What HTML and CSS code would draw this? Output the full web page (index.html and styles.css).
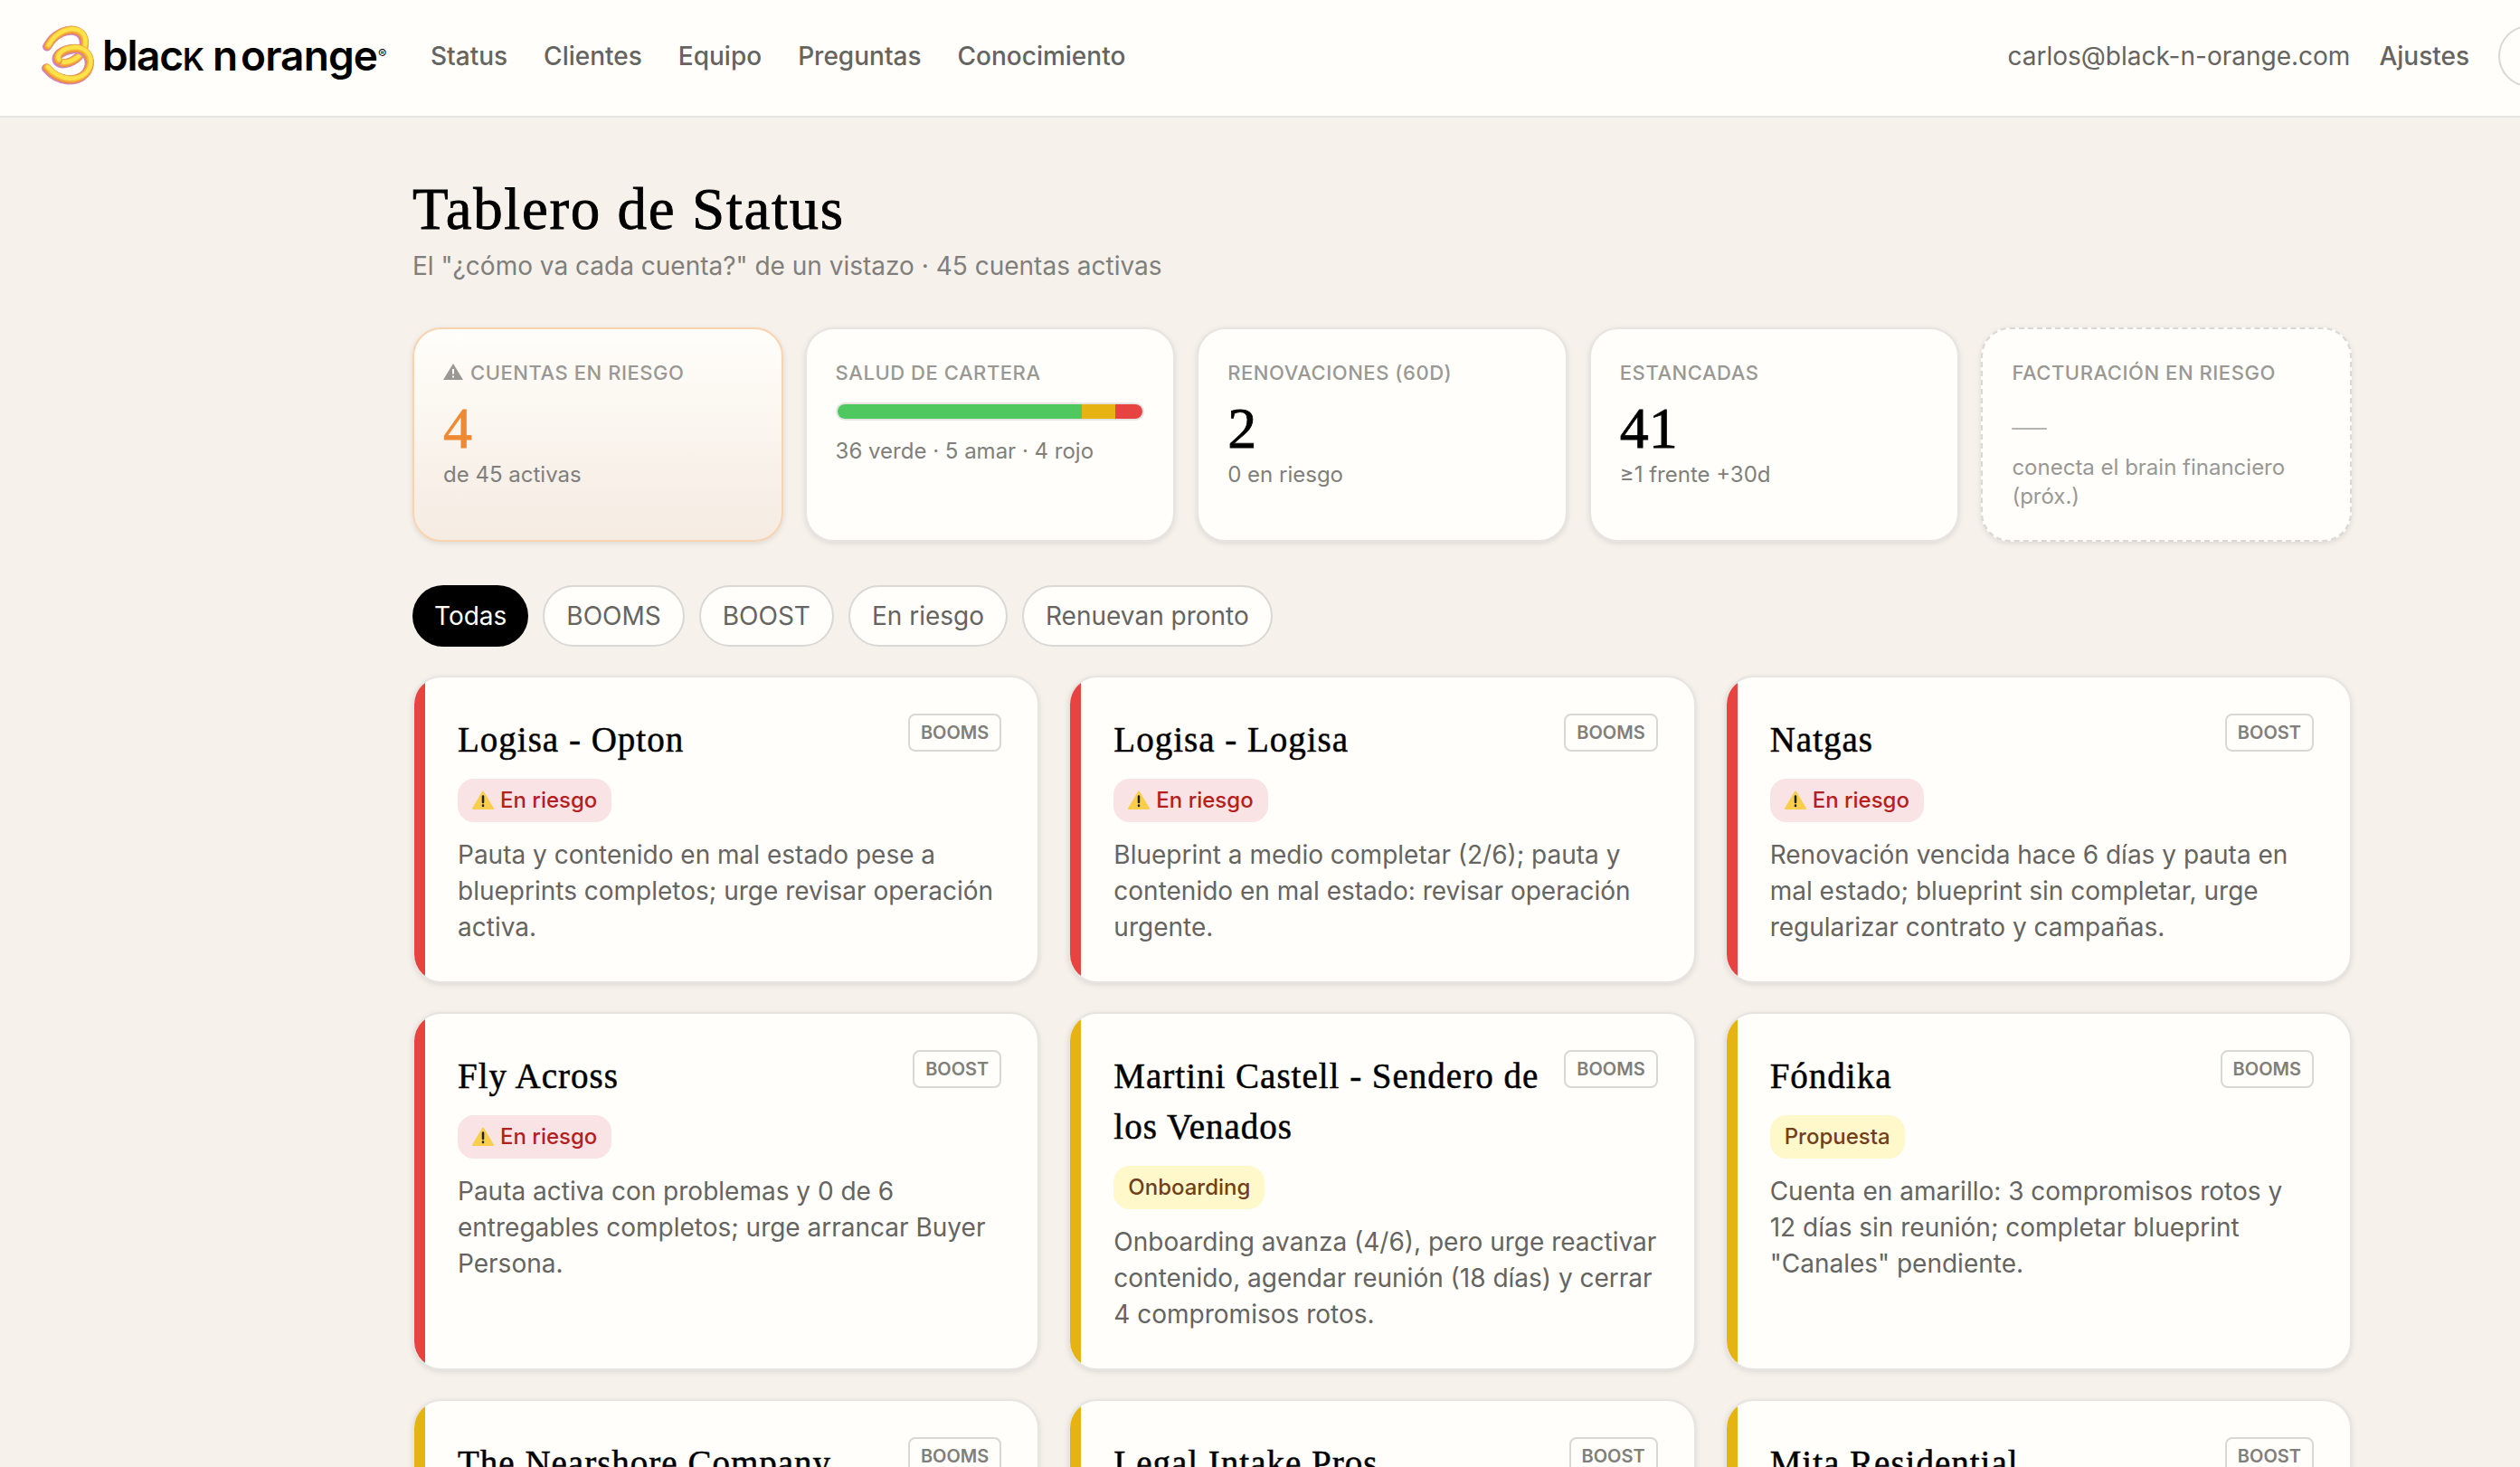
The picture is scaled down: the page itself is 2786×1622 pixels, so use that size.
FILE: index.html
```html
<!DOCTYPE html>
<html lang="es">

<head>
  <meta charset="UTF-8">
  <meta name="viewport" content="width=device-width, initial-scale=1.0">
  <title>Tablero de Status</title>
  <link rel="stylesheet" href="styles.css">
</head>

<body>
  <header class="topbar">
    <a class="brand" href="#">
      <svg width="394" height="80" viewBox="0 0 394 80">
        <defs>
          <path id="coil-top" d="M12 28 C20 13 36 7 46 12 C55 17 54 29 49 36 C43 45 29 50 23.500 44.500 C20 39 28 33 40 31" />
          <path id="coil-bottom" d="M23.500 44 C20 38 28 31.500 40 30.500 C52 29.500 59.500 38 58.500 48 C57 60 46 65.500 35 65 C24 64 16 58 11 52" />
        </defs>
        <g class="coil">
          <use href="#coil-top" class="coil-violet" />
          <use href="#coil-top" class="coil-orange" />
          <use href="#coil-top" class="coil-amber" />
          <use href="#coil-top" class="coil-yellow" />
          <use href="#coil-bottom" class="coil-violet" />
          <use href="#coil-bottom" class="coil-orange" />
          <use href="#coil-bottom" class="coil-amber" />
          <use href="#coil-bottom" class="coil-yellow" />
        </g>
        <text class="wordmark" x="73" y="56" textLength="90">blac</text>
        <text class="wordmark wordmark-k" x="162" y="56">K</text>
        <text class="wordmark" x="195" y="56">n</text>
        <text class="wordmark" x="226" y="56" textLength="152">orange</text>
        <text class="reg" x="378" y="43">®</text>
      </svg>
    </a>
    <nav class="nav">
      <a href="#">Status</a>
      <a href="#">Clientes</a>
      <a href="#">Equipo</a>
      <a href="#">Preguntas</a>
      <a href="#">Conocimiento</a>
    </nav>
    <div class="session">
      <span>carlos@black-n-orange.com</span>
      <a href="#">Ajustes</a>
      <button class="logout" aria-label="Salir"></button>
    </div>
  </header>

  <main class="container">
    <h1>Tablero de Status</h1>
    <p class="subtitle">El "¿cómo va cada cuenta?" de un vistazo · 45 cuentas activas</p>

    <section class="kpis">
      <div class="kpi kpi-risk">
        <div class="kpi-label"><svg class="warn-mono" width="22" height="18" viewBox="0 0 22 18"><path class="tri" d="M11 0 L22 18 H0 Z" /><path class="mark" d="M11 6 V11.500 M11 13.500 V15.500" /></svg>Cuentas en riesgo</div>
        <div class="kpi-value">4</div>
        <div class="kpi-sub">de 45 activas</div>
      </div>
      <div class="kpi">
        <div class="kpi-label">Salud de cartera</div>
        <div class="health">
          <span class="green" style="flex-grow: 36"></span>
          <span class="yellow" style="flex-grow: 5"></span>
          <span class="red" style="flex-grow: 4"></span>
        </div>
        <div class="kpi-sub">36 verde · 5 amar · 4 rojo</div>
      </div>
      <div class="kpi">
        <div class="kpi-label">Renovaciones (60d)</div>
        <div class="kpi-value">2</div>
        <div class="kpi-sub">0 en riesgo</div>
      </div>
      <div class="kpi">
        <div class="kpi-label">Estancadas</div>
        <div class="kpi-value">41</div>
        <div class="kpi-sub">≥1 frente +30d</div>
      </div>
      <div class="kpi kpi-empty">
        <div class="kpi-label">Facturación en riesgo</div>
        <div class="kpi-value">—</div>
        <div class="kpi-sub">conecta el brain financiero (próx.)</div>
      </div>
    </section>

    <div class="filters">
      <button class="chip active">Todas</button>
      <button class="chip">BOOMS</button>
      <button class="chip">BOOST</button>
      <button class="chip">En riesgo</button>
      <button class="chip">Renuevan pronto</button>
    </div>

    <section class="cards">
      <article class="card card-red">
        <div class="card-head">
          <h2>Logisa - Opton</h2>
          <span class="tag">BOOMS</span>
        </div>
        <span class="badge badge-red"><svg class="warn" width="24" height="21" viewBox="0 0 24 21"><path class="tri" d="M12 1.500 L23 20 H1 Z" /><path class="mark" d="M12 6.500 V13 M12 16.500 V17" /></svg>En riesgo</span>
        <p>Pauta y contenido en mal estado pese a blueprints completos; urge revisar operación activa.</p>
      </article>

      <article class="card card-red">
        <div class="card-head">
          <h2>Logisa - Logisa</h2>
          <span class="tag">BOOMS</span>
        </div>
        <span class="badge badge-red"><svg class="warn" width="24" height="21" viewBox="0 0 24 21"><path class="tri" d="M12 1.500 L23 20 H1 Z" /><path class="mark" d="M12 6.500 V13 M12 16.500 V17" /></svg>En riesgo</span>
        <p>Blueprint a medio completar (2/6); pauta y contenido en mal estado: revisar operación urgente.</p>
      </article>

      <article class="card card-red">
        <div class="card-head">
          <h2>Natgas</h2>
          <span class="tag">BOOST</span>
        </div>
        <span class="badge badge-red"><svg class="warn" width="24" height="21" viewBox="0 0 24 21"><path class="tri" d="M12 1.500 L23 20 H1 Z" /><path class="mark" d="M12 6.500 V13 M12 16.500 V17" /></svg>En riesgo</span>
        <p>Renovación vencida hace 6 días y pauta en mal estado; blueprint sin completar, urge regularizar contrato y campañas.</p>
      </article>

      <article class="card card-red">
        <div class="card-head">
          <h2>Fly Across</h2>
          <span class="tag">BOOST</span>
        </div>
        <span class="badge badge-red"><svg class="warn" width="24" height="21" viewBox="0 0 24 21"><path class="tri" d="M12 1.500 L23 20 H1 Z" /><path class="mark" d="M12 6.500 V13 M12 16.500 V17" /></svg>En riesgo</span>
        <p>Pauta activa con problemas y 0 de 6 entregables completos; urge arrancar Buyer Persona.</p>
      </article>

      <article class="card card-yellow">
        <div class="card-head">
          <h2>Martini Castell - Sendero de los Venados</h2>
          <span class="tag">BOOMS</span>
        </div>
        <span class="badge badge-yellow">Onboarding</span>
        <p>Onboarding avanza (4/6), pero urge reactivar contenido, agendar reunión (18 días) y cerrar 4 compromisos rotos.</p>
      </article>

      <article class="card card-yellow">
        <div class="card-head">
          <h2>Fóndika</h2>
          <span class="tag">BOOMS</span>
        </div>
        <span class="badge badge-yellow">Propuesta</span>
        <p>Cuenta en amarillo: 3 compromisos rotos y 12 días sin reunión; completar blueprint "Canales" pendiente.</p>
      </article>

      <article class="card card-yellow">
        <div class="card-head">
          <h2>The Nearshore Company</h2>
          <span class="tag">BOOMS</span>
        </div>
      </article>

      <article class="card card-yellow">
        <div class="card-head">
          <h2>Legal Intake Pros</h2>
          <span class="tag">BOOST</span>
        </div>
      </article>

      <article class="card card-yellow">
        <div class="card-head">
          <h2>Mita Residential</h2>
          <span class="tag">BOOST</span>
        </div>
      </article>
    </section>
  </main>
</body>

</html>
```
FILE: styles.css
```css
* {
  box-sizing: border-box;
}

body {
  font-family: Inter, sans-serif;
  font-size: 28px;
  background-color: #f6f1eb;
  color: #000;
  margin: 0;
  height: 1622px;
  overflow: hidden;
}

h1, h2, p {
  margin: 0;
}

a {
  color: inherit;
  text-decoration: none;
}

.topbar {
  display: flex;
  align-items: center;
  width: 2906px;
  height: 130px;
  padding: 0 0 4px 40px;
  background-color: #fffefa;
  border-bottom: 2px solid #e6e5e1;
  color: #656461;
}

.brand {
  display: flex;
  width: 436px;
  color: #000;
}

.coil {
  transform: translateY(1.5px);
}

.coil use {
  fill: none;
  stroke-linecap: round;
}

.coil-violet {
  stroke: #cf83cf;
  stroke-width: 10px;
}

.coil-orange {
  stroke: #ec8f3f;
  stroke-width: 9px;
  transform: translate(0.8px, -0.6px);
}

.coil-amber {
  stroke: #f6b53e;
  stroke-width: 7px;
  transform: translate(1.3px, -1.2px);
}

.coil-yellow {
  stroke: #fde34a;
  stroke-width: 4.5px;
  transform: translate(1.8px, -1.7px);
}

.wordmark {
  font-size: 46px;
  font-weight: 600;
}

.wordmark-k {
  font-size: 34px;
}

.reg {
  font-size: 14px;
}

.nav {
  display: flex;
  gap: 40px;
  font-weight: 500;
}

.session {
  display: flex;
  align-items: center;
  gap: 32px;
  margin-left: auto;
}

.session a {
  font-weight: 500;
}

.logout {
  width: 144px;
  height: 68px;
  border: 2px solid #d9d8d4;
  border-radius: 34px;
  background: none;
}

.container {
  width: 2144px;
  margin-left: 456px;
  padding-top: 63px;
}

h1 {
  font-family: "Liberation Serif", serif;
  font-size: 65px;
  font-weight: 400;
  line-height: 76px;
  letter-spacing: 1.6px;
  -webkit-text-stroke: 0.8px #000;
}

.subtitle {
  margin-top: 5px;
  line-height: 40px;
  color: #807f7b;
}

.kpis {
  display: grid;
  grid-template-columns: repeat(5, 1fr);
  gap: 24px;
  margin-top: 48px;
}

.kpi {
  height: 237px;
  padding: 34px 32px;
  border: 2px solid #e6e5e1;
  border-radius: 32px;
  background-color: #fffefa;
  box-shadow: 0 2px 6px rgba(0, 0, 0, 0.1);
}

.kpi-risk {
  border-color: #f8d3b0;
  background: linear-gradient(#fffefa, #f5ebe2);
}

.kpi-empty {
  border: 2px dashed #d9d8d4;
}

.kpi-label {
  font-size: 22px;
  font-weight: 500;
  line-height: 28px;
  letter-spacing: 0.55px;
  text-transform: uppercase;
  white-space: nowrap;
  color: #999894;
}

.kpi-value {
  margin-top: 12px;
  font-family: "Liberation Serif", serif;
  font-size: 64px;
  line-height: 72px;
  -webkit-text-stroke: 0.8px;
}

.kpi-risk .kpi-value {
  color: #ef8a34;
}

.kpi-sub {
  margin-top: -1px;
  font-size: 24px;
  line-height: 32px;
  color: #807f7b;
}

.kpi-empty .kpi-value {
  font-size: 38px;
  line-height: 64px;
  color: #b5b4b0;
  -webkit-text-stroke: 0;
}

.kpi-empty .kpi-sub {
  color: #999894;
}

.warn-mono {
  margin-right: 8px;
}

.warn-mono .tri {
  fill: #999894;
}

.warn-mono .mark {
  stroke: #fffefa;
  stroke-width: 2px;
}

.health {
  display: flex;
  height: 20px;
  margin: 19px 0;
  border: 2px solid #e6e5e1;
  border-radius: 10px;
  overflow: hidden;
}

.green {
  background-color: #50c860;
}

.yellow {
  background-color: #e6b412;
}

.red {
  background-color: #e74340;
}

.filters {
  display: flex;
  gap: 16px;
  margin: 48px 0 32px;
}

.chip {
  height: 68px;
  padding: 0 24px;
  font-family: inherit;
  font-size: 28px;
  color: #656461;
  background-color: #fffefa;
  border: 2px solid #d9d8d4;
  border-radius: 34px;
}

.chip.active {
  color: #fffefa;
  background-color: #000;
  border: none;
}

.cards {
  display: grid;
  grid-template-columns: repeat(3, 1fr);
  gap: 32px;
}

.card {
  position: relative;
  min-height: 340px;
  padding: 40px 40px 40px 48px;
  border: 2px solid #e6e5e1;
  border-radius: 32px;
  background-color: #fffefa;
  box-shadow: 0 2px 6px rgba(0, 0, 0, 0.1);
  overflow: hidden;
}

/* status stripe, clipped by the card's rounded corners */
.card::before {
  content: "";
  position: absolute;
  top: 0;
  bottom: 0;
  left: 0;
  width: 12px;
}

.card-red::before {
  background-color: #e74340;
}

.card-yellow::before {
  background-color: #e6b412;
}

.card-head {
  display: flex;
  align-items: flex-start;
  justify-content: space-between;
  gap: 24px;
}

h2 {
  padding-top: 1px;
  margin-bottom: -1px;
  font-family: "Liberation Serif", serif;
  font-size: 39px;
  font-weight: 400;
  line-height: 56px;
  letter-spacing: 1px;
  -webkit-text-stroke: 0.5px #000;
}

.tag {
  flex: none;
  padding: 0 12px;
  font-size: 20px;
  font-weight: 600;
  line-height: 38px;
  color: #807f7b;
  border: 2px solid #d9d8d4;
  border-radius: 8px;
}

.badge {
  display: flex;
  align-items: center;
  width: fit-content;
  height: 48px;
  margin: 16px 0;
  padding: 0 16px 1px;
  font-size: 24px;
  font-weight: 500;
  border-radius: 18px;
}

.badge-red {
  color: #b42020;
  background-color: #f9e3e4;
}

.badge-yellow {
  color: #71401a;
  background-color: #fef8cb;
}

.warn {
  margin-right: 7px;
}

.warn .tri {
  fill: #f9ce4c;
  stroke: #f9ce4c;
  stroke-width: 2px;
  stroke-linejoin: round;
}

.warn .mark {
  stroke: #221f10;
  stroke-width: 2.5px;
  stroke-linecap: round;
}

.card p {
  line-height: 40px;
  color: #656461;
}
```
